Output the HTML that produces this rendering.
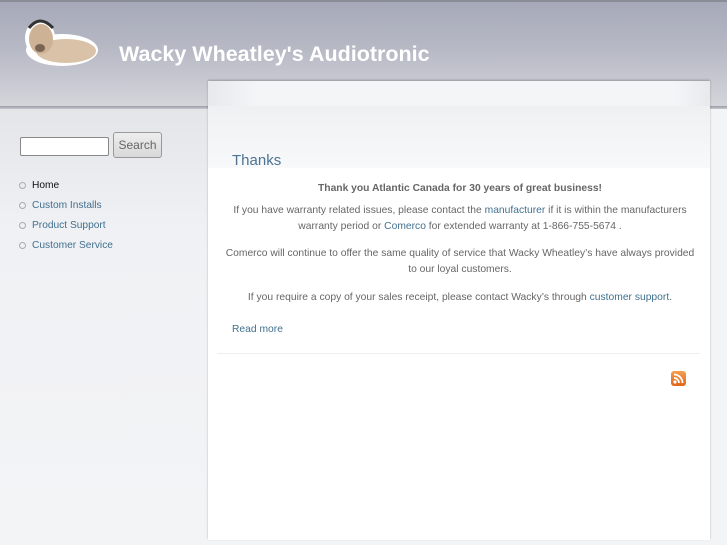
<!DOCTYPE html>
<html><head><style>
*{margin:0;padding:0;box-sizing:border-box}
body{width:727px;height:545px;overflow:hidden;position:relative;font-family:"Liberation Sans",sans-serif;background:#f3f4f6}
#hdr{position:absolute;left:0;top:0;width:727px;height:109px;background:linear-gradient(#a6a9b8 0%,#b7b9c5 45%,#d6d7dc 100%);border-top:2px solid #8a8c96}
#hdr:after{content:"";position:absolute;left:0;right:0;bottom:0;height:3px;background:linear-gradient(#9a9ca6,#c8c9cf)}
#side{position:absolute;left:0;top:109px;width:208px;height:436px;background:linear-gradient(#e4e5e9,#f0f1f4 120px,#f3f4f6)}
#title{position:absolute;left:119px;top:40px;color:#fff;font-size:21.5px;font-weight:bold}
#panel{position:absolute;left:208px;top:81px;width:502px;height:459px;background:#fff;box-shadow:0 -1px 2px rgba(0,0,0,.25)}
#ptop{position:absolute;left:0;top:0;width:502px;height:25px;background:linear-gradient(90deg,#e8e9ec,#f4f5f7 10%,#f4f5f7 93%,#e8e9ec)}
#pband{position:absolute;left:0;top:25px;width:502px;height:62px;background:linear-gradient(#eef0f2,#f8f9fa)}
input{position:absolute;left:20px;top:137px;width:89px;height:19px;border:1px solid #888;border-radius:2px;background:#fff}
button{position:absolute;left:113px;top:132px;width:49px;height:26px;border:1px solid #999;border-radius:3px;background:linear-gradient(#eee,#d8d8d8);color:#666;font-size:12px;font-family:"Liberation Sans",sans-serif}
ul{position:absolute;left:18px;top:180px;list-style:none;font-size:10.2px}
li{height:20px;position:relative;padding-left:14px;color:#41708f}
li:before{content:"";position:absolute;left:1px;top:2px;width:5px;height:5px;border:1px solid #aaa;border-radius:50%}
li.h{color:#111}
h2{position:absolute;left:232px;top:152px;font-size:15px;font-weight:normal;color:#4c7394}
.c{position:absolute;left:226px;width:468px;text-align:center;font-size:10.3px;color:#666;line-height:16px;white-space:nowrap}
a{color:#41708f;text-decoration:none}
hr{position:absolute;left:217px;top:353px;width:483px;border:0;border-top:1px solid #eee}
#rss{position:absolute;left:671px;top:371px;width:15px;height:15px;border-radius:3px;background:linear-gradient(#f5a050,#e0651a)}
</style></head><body>
<div id="hdr">
<svg style="position:absolute;left:20px;top:12px" width="80" height="56" viewBox="0 0 80 56">
<ellipse cx="42" cy="36" rx="36" ry="16" fill="#fff"/>
<ellipse cx="20" cy="24" rx="15" ry="18" fill="#fff"/>
<ellipse cx="46" cy="37" rx="30" ry="12" fill="#d9c2a8"/>
<ellipse cx="21" cy="25" rx="12" ry="15" fill="#cdb295"/>
<path d="M9 14 Q20 0 33 14" stroke="#333" stroke-width="3" fill="none"/>
<ellipse cx="20" cy="34" rx="5" ry="4" fill="#7a6555"/>
</svg>
<div id="title">Wacky Wheatley's Audiotronic</div>
</div>
<div id="side"></div>
<div id="panel"><div id="ptop"></div><div id="pband"></div></div>
<input type="text"><button>Search</button>
<ul><li class="h">Home</li><li>Custom Installs</li><li>Product Support</li><li>Customer Service</li></ul>
<h2>Thanks</h2>
<div class="c" style="top:181px;font-weight:bold">Thank you Atlantic Canada for 30 years of great business!</div>
<div class="c" style="top:203px">If you have warranty related issues, please contact the <a>manufacturer</a> if it is within the manufacturers<br>warranty period or <a>Comerco</a> for extended warranty at 1-866-755-5674 .</div>
<div class="c" style="top:246px;left:216px;width:488px">Comerco will continue to offer the same quality of service that Wacky Wheatley’s have always provided<br>to our loyal customers.</div>
<div class="c" style="top:290px">If you require a copy of your sales receipt, please contact Wacky’s through <a>customer support</a>.</div>
<div style="position:absolute;left:232px;top:324px;font-size:10.3px"><a>Read more</a></div>
<hr>
<div id="rss"><svg width="15" height="15"><circle cx="4" cy="11" r="1.6" fill="#fff"/><path d="M3 7a5 5 0 0 1 5 5M3 3.5a8.5 8.5 0 0 1 8.5 8.5" stroke="#fff" stroke-width="1.8" fill="none"/></svg></div>
</body></html>
